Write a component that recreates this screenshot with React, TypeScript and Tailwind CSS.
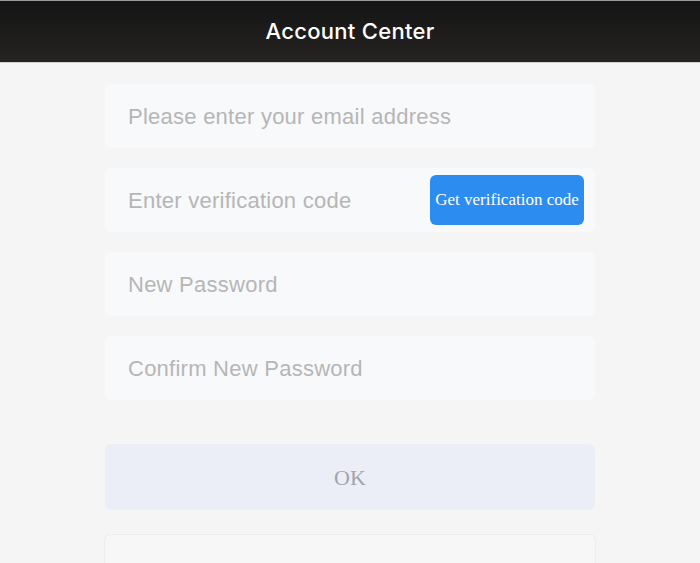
export default function App() {
  const fields = ["Please enter your email address", "Enter verification code", "New Password", "Confirm New Password"]

  return (
    <div className="h-[563px] w-full overflow-hidden bg-[#f5f5f5] flex flex-col font-['Liberation_Sans',Arial,sans-serif]">
      <header className="h-[63px] shrink-0 border-t border-t-[#9a9a9a] border-b border-b-[#cfcfcf] bg-gradient-to-b from-[#141414] via-[#1d1c1b] to-[#242322] flex items-center justify-center">
        <h1 className="text-white text-[22px] font-medium tracking-[0.3px] font-['Inter',sans-serif]">Account Center</h1>
      </header>

      <main className="flex-1 flex flex-col items-center pt-[21px]">
        <div className="w-[490px] flex flex-col gap-5">
          {fields.map((label, i) => (
            <div key={label} className="h-16 rounded-md bg-[#f8f9fa] flex items-center justify-between pl-[23px] pr-[11px]">
              <span className="text-[22px] tracking-[0.25px] text-[#b6b6b6]">{label}</span>
              {i === 1 && (
                <button className="h-[50px] w-[154px] rounded-md bg-[#2d8cf0] text-white text-[17px] font-['Liberation_Serif',serif]">
                  Get verification code
                </button>
              )}
            </div>
          ))}
        </div>

        <button className="mt-11 h-[66px] w-[490px] rounded-md bg-[#eceef7] text-[22px] text-[#9fa4ae] font-['Liberation_Serif',serif]">
          OK
        </button>

        <div className="mt-6 h-10 w-[492px] shrink-0 rounded-md border border-[#ecedf0] bg-[#f7f7f8]" />
      </main>

      <div className="h-[3px] shrink-0 bg-[#c8c8c8]" />
    </div>
  )
}
